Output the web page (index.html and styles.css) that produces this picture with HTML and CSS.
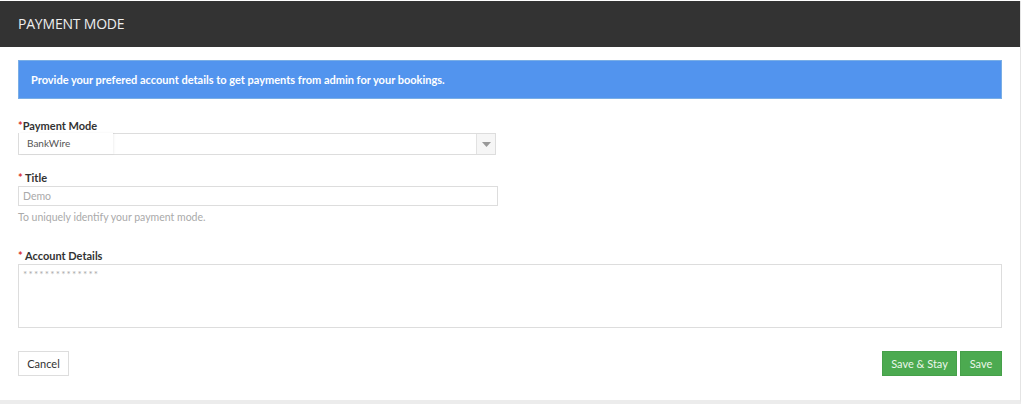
FILE: index.html
```html
<!DOCTYPE html>
<html>
<head>
<meta charset="utf-8">
<link rel="stylesheet" href="styles.css">
</head>
<body>
<div class="panel">
  <div class="panel-head">PAYMENT MODE</div>
  <div class="panel-body">
    <div class="alert">Provide your prefered account details to get payments from admin for your bookings.</div>
    <div class="field field-first">
      <label class="label"><span class="req">*</span>Payment Mode</label>
      <div class="select">
        <span class="select-chip">BankWire</span>
        <span class="select-arrow"><svg width="9" height="5" viewBox="0 0 9 5"><path d="M0 0h9L4.5 5z" fill="#999"/></svg></span>
      </div>
    </div>
    <div class="field field-title">
      <label class="label"><span class="req">*</span> Title</label>
      <div class="input input-title">Demo</div>
      <div class="help">To uniquely identify your payment mode.</div>
    </div>
    <div class="field field-account">
      <label class="label"><span class="req">*</span> Account Details</label>
      <div class="textarea">**************</div>
    </div>
    <div class="actions">
      <button class="btn btn-default">Cancel</button>
      <div class="btn-group">
        <button class="btn btn-success">Save &amp; Stay</button>
        <button class="btn btn-success">Save</button>
      </div>
    </div>
  </div>
</div>
</body>
</html>
```
FILE: styles.css
```css
html, body {
  margin: 0;
  padding: 0;
  background: #fff;
}
body {
  padding-top: 1px;
  font-family: Lato, "Open Sans", "Liberation Sans", sans-serif;
  color: #333;
}
.panel {
  width: 1020px;
  height: 399px;
  border-right: 1px solid #e4e4e4;
  border-bottom: 4px solid #ececec;
  background: #fff;
}
.panel-head {
  height: 46px;
  background: #333;
  color: #eee;
  font-family: "Open Sans", "Liberation Sans", sans-serif;
  font-size: 14px;
  line-height: 46px;
  padding-left: 18px;
  letter-spacing: -0.2px;
}
.panel-body {
  padding: 13px 18px 0 18px;
}
.alert {
  height: 37px;
  background: #5294ee;
  border: 1px solid #79aee6;
  color: #fff;
  font-weight: bold;
  font-size: 11px;
  line-height: 37px;
  padding-left: 12px;
}
.label {
  display: block;
  font-weight: bold;
  font-size: 11px;
  line-height: 14px;
  color: #333;
}
.req {
  color: #d9302c;
}
.field-first {
  margin-top: 20px;
}
.select {
  width: 476px;
  height: 20px;
  border: 1px solid #ddd;
  display: flex;
  justify-content: space-between;
  align-items: stretch;
}
.select-chip {
  background: #fff;
  margin-top: -1px;
  width: 86px;
  font-size: 10px;
  color: #555;
  line-height: 20px;
  padding-left: 8px;
  box-shadow: 1px 0 2px rgba(0,0,0,0.06);
}
.select-arrow {
  width: 18px;
  background: #f6f6f6;
  border-left: 1px solid #e2e2e2;
  display: flex;
  align-items: center;
  justify-content: center;
}
.field-title {
  margin-top: 16px;
}
.input {
  width: 474px;
  height: 18px;
  border: 1px solid #ddd;
  font-size: 10.5px;
  line-height: 18px;
  color: #aaa;
  padding-left: 4px;
  margin-top: 1px;
}
.help {
  margin-top: 4px;
  font-size: 10.5px;
  color: #aaa;
  line-height: 14px;
}
.field-account {
  margin-top: 25px;
}
.textarea {
  border: 1px solid #ddd;
  font-size: 10px;
  line-height: 14px;
  color: #aaa;
  padding-left: 4px;
  box-sizing: border-box;
  height: 64px;
  padding-top: 2px;
  margin-top: 1px;
  letter-spacing: 1.2px;
}
.actions {
  margin-top: 23px;
  display: flex;
  justify-content: space-between;
}
.btn {
  font-family: Lato, "Open Sans", "Liberation Sans", sans-serif;
  font-size: 11px;
  height: 25px;
  line-height: 23px;
  padding: 0;
  border: 1px solid #ddd;
  background: #fff;
  color: #333;
  margin: 0;
  border-radius: 0;
}
.btn-default {
  width: 51px;
}
.btn-group {
  display: flex;
  gap: 3px;
}
.btn-success {
  background: #4caa50;
  border-color: #46a04a;
  color: #eaf6ea;
}
.btn-success:first-child {
  width: 75px;
}
.btn-success:last-child {
  width: 42px;
}
```
